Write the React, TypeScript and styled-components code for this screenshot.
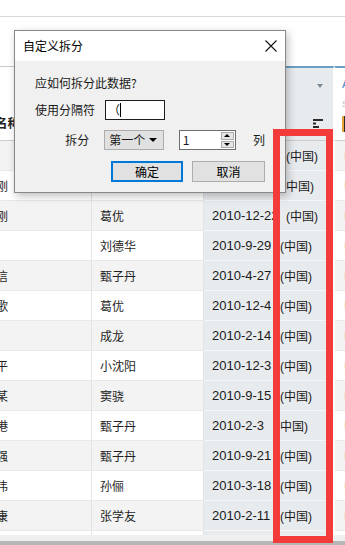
import styled, { createGlobalStyle } from "styled-components";

const GlobalStyle = createGlobalStyle`
  html, body {
    margin: 0;
    padding: 0;
    background: #fff;
  }
  body {
    font-family: "Liberation Sans", "Noto Sans CJK SC", sans-serif;
    color: #1f1f1f;
    overflow: hidden;
  }
  * {
    box-sizing: border-box;
  }
`;

const Page = styled.div`
  position: relative;
  width: 345px;
  height: 545px;
  overflow: hidden;
  background: #fff;
`;

const TopBar = styled.div`
  height: 17px;
  border-bottom: 1px solid #d9d9d9;
`;

const Gap = styled.div`
  height: 49px;
`;

const Viewport = styled.div`
  width: 345px;
  overflow: hidden;
`;

/* table is scrolled sideways, first column partly out of view */
const Grid = styled.div`
  display: grid;
  grid-template-columns: 130px 112px 75px 56px 70px;
  margin-left: -38px;
  width: max-content;
`;

const NameHead = styled.div`
  height: 75px;
  display: flex;
  align-items: flex-end;
  padding: 0 8px 8px;
  font-size: 12.5px;
  font-weight: bold;
  color: #222;
  border-top: 1px solid #c9c9c9;
  border-bottom: 1px solid #cdcdcd;
  border-right: 1px solid #e3e3e3;
  white-space: nowrap;
`;

const DateHead = styled.div`
  grid-column: span 2;
  height: 75px;
  background: #e8ebee;
  border-top: 2px solid #6b9fc3;
  border-bottom: 1px solid #cdcdcd;
  border-right: 2px solid #fff;
  display: flex;
  flex-direction: column;
  align-items: flex-end;
  justify-content: space-between;
  padding: 16px 10px 12px;
`;

const DropArrow = styled.div<{ $color: string; $w: number }>`
  width: 0;
  height: 0;
  border-left: ${(p) => p.$w / 2}px solid transparent;
  border-right: ${(p) => p.$w / 2}px solid transparent;
  border-top: 4px solid ${(p) => p.$color};
`;

const ExtraHead = styled.div`
  height: 75px;
  border-top: 2px solid #6b9fc3;
  border-bottom: 1px solid #cdcdcd;
  display: flex;
  flex-direction: column;
  gap: 6px;
  padding: 10px 0 0 7px;
  font-size: 11px;
  line-height: 13px;
`;

const HeadLetter = styled.span<{ $color: string }>`
  color: ${(p) => p.$color};
`;

const HeadBar = styled.div`
  width: 5px;
  height: 16px;
  background: #2a2a2a;
  border-left: 2px solid #e8a23a;
`;

const Cell = styled.div<{ $alt: boolean; $short?: boolean }>`
  height: ${(p) => (p.$short ? 4 : 30)}px;
  display: flex;
  align-items: center;
  padding: 0 8px;
  font-size: 12px;
  white-space: nowrap;
  overflow: hidden;
  color: #1f1f1f;
  background: ${(p) => (p.$alt ? "#f3f3f3" : "#fff")};
  border-bottom: ${(p) => (p.$short ? "none" : "1px solid #e9e9e9")};
`;

const NameCell = styled(Cell)`
  padding-left: 10px;
  border-right: 1px solid #e3e3e3;
`;

const ActorCell = styled(Cell)`
  border-right: 1px solid #e3e3e3;
`;

const DateCell = styled(Cell)`
  background: #e8ebee;
  border-bottom-color: #f5f6f8;
  font-size: 13px;
  color: #1a1a1a;
`;

const RegionCell = styled(Cell)<{ $pad: number }>`
  background: #e8ebee;
  border-bottom-color: #f5f6f8;
  border-right: 2px solid #fff;
  padding-left: ${(p) => p.$pad}px;
  color: #1a1a1a;
`;

const ExtraCell = styled(Cell)`
  padding-left: 9px;
  color: #9c2a3f;
`;

const OrangeMark = styled.span`
  display: inline-block;
  width: 3px;
  height: 5px;
  margin-left: 7px;
  border-radius: 2px;
  background: #e0a040;
`;

const ScrollTrack = styled.div`
  height: 6px;
  background: #efefef;
`;

const ScrollThumb = styled.div`
  height: 4px;
  background: #b7b7b7;
`;

const Dialog = styled.div`
  position: absolute;
  left: 14px;
  top: 30px;
  width: 272px;
  height: 163px;
  border: 1px solid #888;
  background: #f0f0f0;
  box-shadow: 2px 3px 8px rgba(0, 0, 0, 0.25);
  display: flex;
  flex-direction: column;
  z-index: 2;
  font-family: "Noto Sans CJK SC", sans-serif;
  font-size: 12px;
  line-height: 16px;
  color: #1a1a1a;
`;

const TitleBar = styled.div`
  height: 30px;
  background: #fff;
  display: flex;
  align-items: center;
  justify-content: space-between;
  padding: 0 8px;
  color: #000;
`;

const DialogBody = styled.div`
  padding: 14px 20px 0;
  display: flex;
  flex-direction: column;
`;

const FormRow = styled.div<{ $top: number }>`
  display: flex;
  align-items: center;
  height: 20px;
  margin-top: ${(p) => p.$top}px;
`;

const Label = styled.span<{ $right?: boolean }>`
  width: 70px;
  text-align: ${(p) => (p.$right ? "right" : "left")};
  padding-right: ${(p) => (p.$right ? 15 : 0)}px;
`;

const TextInput = styled.div`
  width: 60px;
  height: 20px;
  border: 1px solid #1e1e1e;
  background: #fff;
  display: flex;
  align-items: center;
  padding-left: 2px;
`;

const Caret = styled.span`
  width: 1px;
  height: 14px;
  background: #000;
`;

const Select = styled.div`
  width: 60px;
  height: 20px;
  background: #e1e1e1;
  border: 1px solid #adadad;
  display: flex;
  align-items: center;
  justify-content: space-between;
  padding: 0 6px 0 4px;
`;

const SpinBox = styled.div`
  width: 58px;
  height: 20px;
  margin-left: 15px;
  border: 1px solid #6e6e6e;
  background: #fff;
  display: flex;
  align-items: center;
  justify-content: space-between;
  padding: 1px 1px 1px 3px;
`;

const SpinButtons = styled.div`
  width: 13px;
  height: 100%;
  display: flex;
  flex-direction: column;
  gap: 1px;
`;

const SpinBtn = styled.div<{ $up?: boolean }>`
  flex: 1;
  background: #e5e5e5;
  border: 1px solid #acacac;
  display: flex;
  align-items: center;
  justify-content: center;

  &::after {
    content: "";
    border-left: 3px solid transparent;
    border-right: 3px solid transparent;
    ${(p) =>
      p.$up ? "border-bottom: 3px solid #000;" : "border-top: 3px solid #000;"}
  }
`;

const Unit = styled.span`
  margin-left: 17px;
`;

const ButtonRow = styled.div`
  display: flex;
  justify-content: flex-end;
  gap: 9px;
  margin-top: 11px;
`;

const Button = styled.button<{ $primary?: boolean; $w: number }>`
  width: ${(p) => p.$w}px;
  height: 21px;
  padding: 0;
  background: #e1e1e1;
  border: ${(p) => (p.$primary ? "2px solid #0078d7" : "1px solid #adadad")};
  font: inherit;
  color: #000;
`;

const Highlight = styled.div`
  position: absolute;
  left: 273px;
  top: 129px;
  width: 60px;
  height: 414px;
  border: 7px solid #f33b3b;
  z-index: 3;
  pointer-events: none;
`;

type Movie = {
  name: string;
  actor: string;
  date: string;
  region: string;
  pad: number;
  mark?: boolean;
};

const movies: Movie[] = [
  { name: "唐山", actor: "冯小刚", date: "2010-7-22", region: "(中国)", pad: 7 },
  { name: "大金刚", actor: "葛优", date: "2010-12-1", region: "中国)", pad: 7 },
  { name: "小金刚", actor: "葛优", date: "2010-12-22", region: "(中国)", pad: 7 },
  { name: "天下", actor: "刘德华", date: "2010-9-29", region: "(中国)", pad: 1 },
  { name: "风声信", actor: "甄子丹", date: "2010-4-27", region: "(中国)", pad: 1 },
  { name: "赵氏歌", actor: "葛优", date: "2010-12-4", region: "(中国)", pad: 1 },
  { name: "大兵", actor: "成龙", date: "2010-2-14", region: "(中国)", pad: 1 },
  { name: "让子平", actor: "小沈阳", date: "2010-12-3", region: "(中国)", pad: 1 },
  { name: "无人某", actor: "窦骁", date: "2010-9-15", region: "(中国)", pad: 1 },
  { name: "到香港", actor: "甄子丹", date: "2010-2-3", region: "中国)", pad: 1, mark: true },
  { name: "发图强", actor: "甄子丹", date: "2010-9-21", region: "(中国)", pad: 1 },
  { name: "李大伟", actor: "孙俪", date: "2010-3-18", region: "(中国)", pad: 1 },
  { name: "永安康", actor: "张学友", date: "2010-2-11", region: "(中国)", pad: 1 },
];

function SortIcon() {
  return (
    <svg width="10" height="9" viewBox="0 0 10 9">
      <rect x="0" y="0" width="10" height="2" fill="#2b2b2b" />
      <rect x="0" y="3.5" width="3" height="2" fill="#2b2b2b" />
      <rect x="0" y="7" width="6" height="2" fill="#2b2b2b" />
    </svg>
  );
}

function CloseIcon() {
  return (
    <svg width="12" height="12" viewBox="0 0 12 12">
      <path d="M0.5 0.5 L11.5 11.5 M11.5 0.5 L0.5 11.5" stroke="#111" strokeWidth="1.1" />
    </svg>
  );
}

export default function App() {
  return (
    <Page>
      <GlobalStyle />
      <TopBar />
      <Gap />
      <Viewport>
        <Grid>
          <NameHead>影片名称</NameHead>
          <NameHead>主演</NameHead>
          <DateHead>
            <DropArrow $color="#7b8996" $w={7} />
            <SortIcon />
          </DateHead>
          <ExtraHead>
            <HeadLetter $color="#3b82c4">A</HeadLetter>
            <HeadLetter $color="#c4c4c4">s</HeadLetter>
            <HeadBar />
          </ExtraHead>

          {movies.map((m, i) => {
            const alt = i % 2 === 0;
            return [
              <NameCell key={`n${i}`} $alt={alt}>{m.name}</NameCell>,
              <ActorCell key={`a${i}`} $alt={alt}>{m.actor}</ActorCell>,
              <DateCell key={`d${i}`} $alt={alt}>
                {m.date}
                {m.mark && <OrangeMark />}
              </DateCell>,
              <RegionCell key={`r${i}`} $alt={alt} $pad={m.pad}>{m.region}</RegionCell>,
              <ExtraCell key={`e${i}`} $alt={alt}>中国</ExtraCell>,
            ];
          })}

          <NameCell $alt={false} $short />
          <ActorCell $alt={false} $short />
          <DateCell $alt={false} $short />
          <RegionCell $alt={false} $short $pad={1} />
          <ExtraCell $alt={false} $short />
        </Grid>
      </Viewport>
      <ScrollTrack />
      <ScrollThumb />

      <Dialog>
        <TitleBar>
          <span>自定义拆分</span>
          <CloseIcon />
        </TitleBar>
        <DialogBody>
          <span>应如何拆分此数据?</span>
          <FormRow $top={9}>
            <Label>使用分隔符</Label>
            <TextInput>
              <span>（</span>
              <Caret />
            </TextInput>
          </FormRow>
          <FormRow $top={10}>
            <Label $right>拆分</Label>
            <Select>
              <span>第一个</span>
              <DropArrow $color="#000" $w={8} />
            </Select>
            <SpinBox>
              <span>1</span>
              <SpinButtons>
                <SpinBtn $up />
                <SpinBtn />
              </SpinButtons>
            </SpinBox>
            <Unit>列</Unit>
          </FormRow>
          <ButtonRow>
            <Button $primary $w={72}>确定</Button>
            <Button $w={73}>取消</Button>
          </ButtonRow>
        </DialogBody>
      </Dialog>

      <Highlight />
    </Page>
  );
}
